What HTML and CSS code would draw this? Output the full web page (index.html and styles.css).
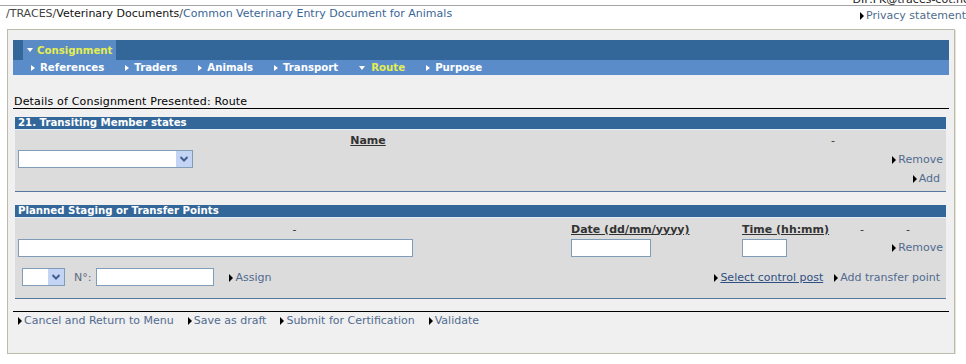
FILE: index.html
```html
<!DOCTYPE html>
<html lang="en">

<head>
  <meta charset="UTF-8">
  <meta name="viewport" content="width=device-width, initial-scale=1.0">
  <title>Common Veterinary Entry Document for Animals</title>
  <link rel="stylesheet" href="styles.css">
</head>

<body>

  <div class="topbar">
    <div class="user">DIP.FK@traces-cot.net</div>
  </div>

  <div class="crumbs">
    <div class="path">/TRACES/<span class="crumb-dark">Veterinary Documents</span>/<a href="#">Common Veterinary Entry Document for Animals</a></div>
    <a class="link arrow privacy" href="#">Privacy statement</a>
  </div>

  <div class="panel">

    <!-- Certificate menu -->
    <div class="menu">
      <div class="menu-main">
        <span class="tab open">Consignment</span>
      </div>
      <div class="menu-sub">
        <a class="sub-item" href="#">References</a>
        <a class="sub-item" href="#">Traders</a>
        <a class="sub-item" href="#">Animals</a>
        <a class="sub-item" href="#">Transport</a>
        <a class="sub-item open current" href="#">Route</a>
        <a class="sub-item" href="#">Purpose</a>
      </div>
    </div>

    <h2 class="page-title">Details of Consignment Presented: Route</h2>

    <!-- Box 21 -->
    <div class="section">
      <div class="section-head">21. Transiting Member states</div>
      <div class="section-body states">
        <div class="col-label center">Name</div>
        <div></div>
        <div class="dash">-</div>

        <div class="select wide">
          <select></select>
          <span class="select-btn"><svg width="16" height="16" viewBox="0 0 16 16"><rect width="16" height="16" fill="#c4d4f4"/><path d="M4.5 6 L8 9.5 L11.5 6" fill="none" stroke="#41608f" stroke-width="2"/></svg></span>
        </div>
        <div></div>
        <a class="link arrow end" href="#">Remove</a>

        <div></div>
        <div></div>
        <a class="link arrow end add" href="#">Add</a>
      </div>
    </div>

    <!-- Staging / transfer points -->
    <div class="section second">
      <div class="section-head">Planned Staging or Transfer Points</div>
      <div class="section-body points">
        <div class="dash center">-</div>
        <div class="col-label">Date (dd/mm/yyyy)</div>
        <div class="col-label">Time (hh:mm)</div>
        <div class="dash">-</div>
        <div class="dash">-</div>

        <input class="field place" type="text">
        <input class="field date" type="text">
        <input class="field time" type="text">
        <a class="link arrow end remove-point" href="#">Remove</a>

        <div class="point-actions">
          <div class="group">
            <div class="select small">
              <select></select>
              <span class="select-btn"><svg width="16" height="16" viewBox="0 0 16 16"><rect width="16" height="16" fill="#c4d4f4"/><path d="M4.5 6 L8 9.5 L11.5 6" fill="none" stroke="#41608f" stroke-width="2"/></svg></span>
            </div>
            <span class="num-label">N°:</span>
            <input class="field number" type="text">
            <a class="link arrow assign" href="#">Assign</a>
          </div>
          <div class="group right">
            <a class="link arrow control" href="#">Select control post</a>
            <a class="link arrow" href="#">Add transfer point</a>
          </div>
        </div>
      </div>
    </div>

    <div class="actions">
      <a class="link arrow" href="#">Cancel and Return to Menu</a>
      <a class="link arrow" href="#">Save as draft</a>
      <a class="link arrow" href="#">Submit for Certification</a>
      <a class="link arrow" href="#">Validate</a>
    </div>

  </div>

</body>

</html>
```

FILE: styles.css
```css
/* Old TRACES form look */
body {
  margin: 0;
  font-family: "DejaVu Sans", Verdana, sans-serif;
  font-size: 11px;
  color: #333;
  background-color: #fff;
}

a {
  text-decoration: none;
}

.topbar {
  height: 5px;
  border-bottom: 1px solid #a4a4a4;
  overflow: hidden;
}

.user {
  text-align: right;
  line-height: 11px;
  margin: -6px -8px 0 0;
  color: #222;
  white-space: nowrap;
}

.crumbs {
  display: flex;
  justify-content: space-between;
  padding: 1px 0 0 6px;
  line-height: 13px;
}

.path {
  color: #444;
}

.crumb-dark {
  color: #111;
}

.path a {
  color: #3a6696;
}

.privacy {
  padding-top: 2px;
  color: #3a6696;
  white-space: nowrap;
}

/* links with the small black arrow */
.link {
  color: #506b8f;
  white-space: nowrap;
}

.arrow::before {
  content: "";
  display: inline-block;
  width: 0;
  height: 0;
  border-left: 4px solid #000;
  border-top: 4px solid transparent;
  border-bottom: 4px solid transparent;
  margin-right: 2px;
  vertical-align: -1px;
}

.panel {
  width: 936px;
  margin: 7px 0 0 7px;
  padding: 10px 5px 24px;
  border: 1px solid #bdbcaa;
  background-color: #f0f0f0;
  box-shadow: 1px 1px 0 #e2e2d6;
}

/* menu */
.menu-main {
  height: 20px;
  background-color: #336699;
  padding-left: 10px;
}

.tab {
  display: inline-flex;
  align-items: center;
  box-sizing: border-box;
  width: 93px;
  height: 20px;
  padding-left: 4px;
  background-color: #5b8bc5;
  color: #e4ee50;
  font-size: 10.2px;
  font-weight: bold;
  vertical-align: top;
}

.menu-sub {
  display: flex;
  align-items: center;
  gap: 21px;
  height: 15px;
  padding-left: 18px;
  background-color: #5b8cca;
}

.sub-item {
  display: inline-flex;
  align-items: center;
  color: #fff;
  font-size: 10.2px;
  font-weight: bold;
}

.sub-item::before {
  content: "";
  width: 0;
  height: 0;
  border-left: 4px solid #fff;
  border-top: 3px solid transparent;
  border-bottom: 3px solid transparent;
  margin-right: 5px;
}

.tab.open::before,
.sub-item.open::before {
  content: "";
  width: 0;
  height: 0;
  border-top: 4px solid #fff;
  border-left: 3px solid transparent;
  border-right: 3px solid transparent;
  border-bottom: 0;
  margin-right: 4px;
}

.sub-item.open::before {
  margin-right: 6px;
}

.current {
  color: #e4ee50;
}

.page-title {
  margin: 20px 0 0;
  padding-left: 1px;
  font-size: 11px;
  font-weight: normal;
  letter-spacing: 0.18px;
  line-height: 13px;
  color: #000;
  border-bottom: 1px solid #000;
}

/* sections */
.section {
  margin: 8px 3px 0 2px;
}

.section.second {
  margin-top: 13px;
}

.section-head {
  height: 12px;
  line-height: 12px;
  padding-left: 3px;
  background-color: #336699;
  color: #fff;
  font-size: 10.2px;
  font-weight: bold;
  border-bottom: 1px solid #e4ecf4;
}

.section-body {
  display: grid;
  background-color: #dcdcdc;
  border-bottom: 1px solid #5577a0;
  align-items: center;
}

.states {
  grid-template-columns: 700px 113px 1fr;
  grid-template-rows: 17px 20px 19px;
  padding: 2px 3px 3px;
}

.points {
  grid-template-columns: 553px 171px 118px 46px 1fr;
  grid-template-rows: 14px 23px 27px;
  padding: 4px 3px 12px;
}

.col-label {
  font-weight: bold;
  text-decoration: underline;
  color: #333;
}

.center {
  text-align: center;
}

.dash {
  color: #333;
}

.end {
  justify-self: end;
}

.add {
  padding-right: 3px;
}

.remove-point {
  grid-column: 4 / 6;
}

/* form controls */
.field {
  box-sizing: border-box;
  height: 18px;
  margin: 0;
  padding: 0 2px;
  border: 1px solid #7f9db9;
  background-color: #fff;
  font: inherit;
}

.place {
  width: 395px;
}

.date {
  width: 80px;
}

.time {
  width: 45px;
}

.number {
  width: 118px;
  margin-left: 5px;
}

.select {
  position: relative;
  box-sizing: border-box;
  height: 18px;
  border: 1px solid #7f9db9;
  background-color: #fff;
}

.select select {
  appearance: none;
  display: block;
  width: 100%;
  height: 100%;
  border: 0;
  margin: 0;
  background: transparent;
}

.select-btn {
  position: absolute;
  top: 0;
  right: 0;
  width: 16px;
  height: 16px;
  line-height: 0;
}

.select.wide {
  width: 175px;
}

.select.small {
  width: 43px;
  margin-left: 4px;
}

.point-actions {
  grid-column: 1 / -1;
  align-self: end;
  display: flex;
  justify-content: space-between;
  align-items: center;
  height: 18px;
}

.group {
  display: flex;
  align-items: center;
}

.group.right {
  gap: 11px;
  padding-right: 3px;
}

.num-label {
  margin-left: 9px;
  color: #5a6b80;
}

.assign {
  margin-left: 15px;
}

.control {
  color: #2f4f82;
  text-decoration: underline;
}

/* bottom actions */
.actions {
  display: flex;
  gap: 14px;
  margin-top: 12px;
  padding: 1px 0 0 5px;
  line-height: 16px;
  border-top: 1px solid #000;
}
```
